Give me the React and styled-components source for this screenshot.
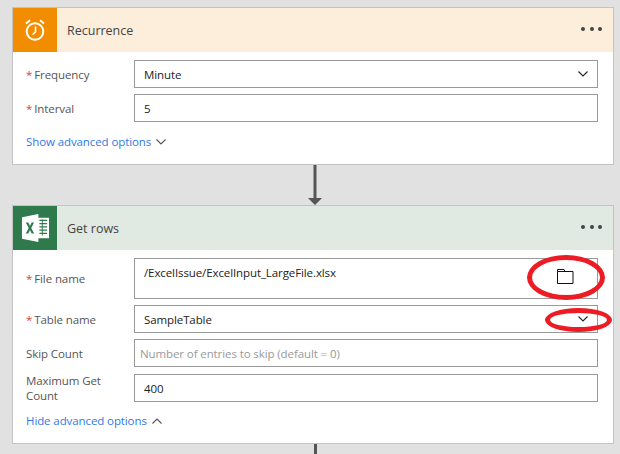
import React from 'react';
import styled, { createGlobalStyle } from 'styled-components';

const Global = createGlobalStyle`
  html, body {
    margin: 0;
    height: 454px;
    overflow: hidden;
    background: #e1e1e1;
  }
`;

const Page = styled.div`
  position: relative;
  width: 620px;
  height: 454px;
  box-sizing: border-box;
  padding: 7px 6px 0 12px;
  font-family: "Open Sans", "Liberation Sans", sans-serif;
  font-size: 11.5px;
  color: #333;
`;

const Card = styled.section`
  border: 1px solid #c4c4c4;
  background: #fff;
`;

const Header = styled.header`
  display: flex;
  align-items: center;
  height: 44px;
  background: ${(p) => p.$tint};
`;

const IconBox = styled.div`
  display: flex;
  align-items: center;
  justify-content: center;
  width: 44px;
  height: 44px;
  background: ${(p) => p.$color};
`;

const Title = styled.div`
  flex: 1;
  margin-left: 10px;
  font-size: 12.5px;
  color: #444;
`;

const Dots = styled.div`
  display: flex;
  gap: 4.5px;
  margin-right: 11px;
  margin-top: -2px;
  > i {
    width: 4px;
    height: 4px;
    border-radius: 50%;
    background: #444;
  }
`;

const Body = styled.div`
  display: flex;
  flex-direction: column;
  gap: 6px;
  padding: 8px 15px 0 13px;
  height: ${(p) => p.$height}px;
  box-sizing: border-box;
`;

const Row = styled.div`
  display: flex;
  align-items: center;
`;

const Label = styled.label`
  width: 108px;
  flex: none;
  line-height: 15px;
  letter-spacing: -0.1px;
  color: #555;
`;

const Star = styled.span`
  color: #e0393e;
  margin-right: 2px;
`;

const Field = styled.div`
  flex: 1;
  display: flex;
  align-items: ${(p) => (p.$tall ? 'flex-start' : 'center')};
  justify-content: space-between;
  box-sizing: border-box;
  height: ${(p) => (p.$tall ? 41 : 28)}px;
  padding: ${(p) => (p.$tall ? '6px 9px 0 9px' : '0 9px')};
  border: 1px solid #999;
  background: #fff;
  letter-spacing: -0.1px;
  color: #222;
`;

const Placeholder = styled.span`
  margin-left: -4px;
  color: #9a9a9a;
`;

const FolderButton = styled.div`
  margin: 4px 14px 0 0;
  line-height: 0;
`;

const LinkRow = styled.div`
  display: flex;
  align-items: center;
  gap: 5px;
  margin-top: ${(p) => p.$top}px;
  letter-spacing: -0.1px;
  color: #2f7ae5;
`;

const Arrow = styled.div`
  display: flex;
  justify-content: center;
  height: 40px;
  padding-left: 4px;
`;

const Tail = styled.div`
  width: 3px;
  height: 10px;
  margin-left: 302px;
  background: #555;
`;

const Mark = styled.div`
  position: absolute;
  left: ${(p) => p.$x}px;
  top: ${(p) => p.$y}px;
  width: ${(p) => p.$w}px;
  height: ${(p) => p.$h}px;
  box-sizing: border-box;
  border: 5px solid #ed1c24;
  border-radius: 50%;
`;

const Chevron = ({ up, color = '#222', size = 10 }) => (
  <svg width={size} height={size * 0.6} viewBox="0 0 10 6" fill="none">
    <path d={up ? 'M0.5 5.5L5 1L9.5 5.5' : 'M0.5 0.5L5 5L9.5 0.5'} stroke={color} strokeWidth="1.1" />
  </svg>
);

const ClockIcon = () => (
  <svg width="22" height="24" viewBox="0 0 22 24" fill="none" stroke="#fff">
    <circle cx="11" cy="13.5" r="8.3" strokeWidth="2" />
    <path d="M11.5 8.5V14L8.5 16.5" strokeWidth="1.6" />
    <path d="M2 5.5L6 2.2M20 5.5L16 2.2" strokeWidth="2" />
  </svg>
);

const ExcelIcon = () => (
  <svg width="29" height="28" viewBox="0 0 30 26" preserveAspectRatio="none">
    <path d="M17 3.5H29V22.5H17Z" fill="#fff" />
    <path d="M19 6H27M19 9H27M19 12H27M19 15H27M19 18H27" stroke="#2f7a4d" strokeWidth="1.2" />
    <path d="M22 5V20" stroke="#2f7a4d" strokeWidth="1" />
    <path d="M1 3L18 0V26L1 23Z" fill="#fff" />
    <path d="M5 8H7.6L9.3 11.2L11 8H13.5L10.6 13L13.6 18H11L9.3 14.8L7.6 18H5L8 13Z" fill="#2f7a4d" />
  </svg>
);

const FolderIcon = () => (
  <svg width="17" height="15" viewBox="0 0 17 15" fill="none" stroke="#111">
    <path d="M0.5 2.5H16V14.5H0.5Z" />
    <path d="M0.5 2.5V0.5H7L8 2.5" />
  </svg>
);

const CardHeader = ({ tint, color, icon, title }) => (
  <Header $tint={tint}>
    <IconBox $color={color}>{icon}</IconBox>
    <Title>{title}</Title>
    <Dots><i /><i /><i /></Dots>
  </Header>
);

const App = () => (
  <Page>
    <Global />
    <Card>
      <CardHeader tint="#fdeedb" color="#f38d00" icon={<ClockIcon />} title="Recurrence" />
      <Body $height={112}>
        <Row>
          <Label><Star>*</Star>Frequency</Label>
          <Field>Minute<Chevron /></Field>
        </Row>
        <Row>
          <Label><Star>*</Star>Interval</Label>
          <Field>5</Field>
        </Row>
        <LinkRow $top={6}>Show advanced options<Chevron color="#555" /></LinkRow>
      </Body>
    </Card>
    <Arrow>
      <svg width="16" height="40" viewBox="0 0 16 40">
        <path d="M6.5 0H9.5V33H15L8 40L1 33H6.5Z" fill="#555" />
      </svg>
    </Arrow>
    <Card>
      <CardHeader tint="#e1eae2" color="#2f7a4d" icon={<ExcelIcon />} title="Get rows" />
      <Body $height={193}>
        <Row>
          <Label><Star>*</Star>File name</Label>
          <Field $tall>
            /ExcelIssue/ExcelInput_LargeFile.xlsx
            <FolderButton><FolderIcon /></FolderButton>
          </Field>
        </Row>
        <Row>
          <Label><Star>*</Star>Table name</Label>
          <Field>SampleTable<Chevron /></Field>
        </Row>
        <Row>
          <Label>Skip Count</Label>
          <Field><Placeholder>Number of entries to skip (default = 0)</Placeholder></Field>
        </Row>
        <Row>
          <Label>Maximum Get Count</Label>
          <Field>400</Field>
        </Row>
        <LinkRow $top={4}>Hide advanced options<Chevron up color="#555" /></LinkRow>
      </Body>
    </Card>
    <Tail />
    <Mark $x={527} $y={255} $w={78} $h={45} />
    <Mark $x={545} $y={308} $w={67} $h={24} />
  </Page>
);

export default App;
